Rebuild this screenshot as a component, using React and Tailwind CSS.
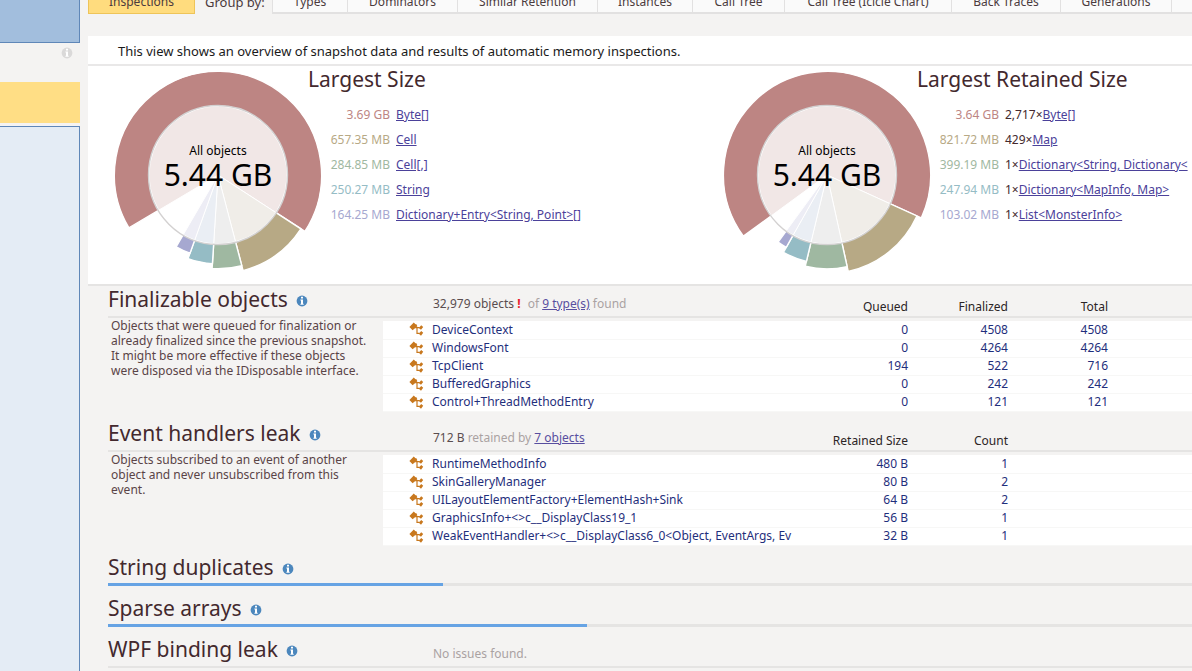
const tabs = [
  { label: "Types", width: "w-[75px]" },
  { label: "Dominators", width: "w-[110px]" },
  { label: "Similar Retention", width: "w-[140px]" },
  { label: "Instances", width: "w-[95px]" },
  { label: "Call Tree", width: "w-[92px]" },
  { label: "Call Tree (Icicle Chart)", width: "w-[167px]" },
  { label: "Back Traces", width: "w-[109px]" },
  { label: "Generations", width: "w-[111px]" },
  { label: "", width: "w-[111px]" },
]

const sliceColors = ["#bd8583", "#b7a985", "#9fb8a1", "#95bcc5", "#a6a8d0"]
const overlayColors = ["#f1e7e6", "#f0ede8", "#eeeeee", "#eaeef4", "#ededf5"]
const sliceRadii = [103.6, 98.8, 93.8, 88.8, 83]
const sizeClasses = ["text-[#bd8583]", "text-[#b7a985]", "text-[#9fb8a1]", "text-[#95bcc5]", "text-[#a6a8d0]"]

const charts = [
  {
    title: "Largest Size",
    angles: [149.3, 393, 435.3, 453.6, 469.7, 480.2],
    rows: [
      { size: "3.69 GB", name: "Byte[]" },
      { size: "657.35 MB", name: "Cell" },
      { size: "284.85 MB", name: "Cell[,]" },
      { size: "250.27 MB", name: "String" },
      { size: "164.25 MB", name: "Dictionary+Entry<String, Point>[]" },
    ],
  },
  {
    title: "Largest Retained Size",
    angles: [143.8, 384.5, 437.6, 463.4, 479.4, 486.1],
    rows: [
      { size: "3.64 GB", count: "2,717×", name: "Byte[]" },
      { size: "821.72 MB", count: "429×", name: "Map" },
      { size: "399.19 MB", count: "1×", name: "Dictionary<String, Dictionary<" },
      { size: "247.94 MB", count: "1×", name: "Dictionary<MapInfo, Map>" },
      { size: "103.02 MB", count: "1×", name: "List<MonsterInfo>" },
    ],
  },
]

const finalizable = [
  ["DeviceContext", "0", "4508", "4508"],
  ["WindowsFont", "0", "4264", "4264"],
  ["TcpClient", "194", "522", "716"],
  ["BufferedGraphics", "0", "242", "242"],
  ["Control+ThreadMethodEntry", "0", "121", "121"],
]

const handlers = [
  ["RuntimeMethodInfo", "480 B", "1"],
  ["SkinGalleryManager", "80 B", "2"],
  ["UILayoutElementFactory+ElementHash+Sink", "64 B", "2"],
  ["GraphicsInfo+<>c__DisplayClass19_1", "56 B", "1"],
  ["WeakEventHandler+<>c__DisplayClass6_0<Object, EventArgs, Ev", "32 B", "1"],
]

function slicePath(from, to, r) {
  const a = (from * Math.PI) / 180
  const b = (to * Math.PI) / 180
  const large = to - from > 180 ? 1 : 0
  return `M104 104 L${104 + r * Math.cos(a)} ${104 + r * Math.sin(a)} A${r} ${r} 0 ${large} 1 ${104 + r * Math.cos(b)} ${104 + r * Math.sin(b)} Z`
}

function InfoIcon({ className }) {
  return (
    <svg viewBox="0 0 12 12" className={className} aria-hidden="true">
      <circle cx="6" cy="6" r="5.4" fill="currentColor" />
      <path d="M5 1.8h2v1.8H5zM4.4 4.6H7v4.2h.7v1H4.4v-1H5V5.6h-.6z" fill="#fff" />
    </svg>
  )
}

function ClassIcon() {
  return (
    <svg viewBox="0 0 15 15" className="h-[15px] w-[15px] shrink-0" fill="#c8781e" aria-hidden="true">
      <path d="M.4 5 4.8.6 6.4 2.2 7.2 2 8.4 4.2 3.6 8.2z" />
      <path d="M6.2 5h4.4v1.2H8.6v4.6h2V12H7.4V6.2H6.2z" />
      <path d="M12.2 3.2 14.2 5 12 7.8 9.8 6zM12.2 9 14.2 10.8 12 13.8 9.8 11.8z" />
    </svg>
  )
}

function Donut({ angles }) {
  return (
    <div className="relative mt-[5px] h-[208px] w-[208px] shrink-0">
      <svg viewBox="0 0 208 208" className="h-full w-full" aria-hidden="true">
        {sliceColors.map((color, i) => (
          <path
            key={color}
            d={slicePath(angles[i], angles[i + 1], sliceRadii[i])}
            fill={color}
            stroke="#fff"
            strokeWidth="1.4"
          />
        ))}
        <circle cx="104" cy="104" r="69.5" fill="#fff" />
        {overlayColors.map((color, i) => (
          <path key={color} d={slicePath(angles[i], angles[i + 1], 69)} fill={color} stroke="#fff" strokeWidth="1" />
        ))}
        <circle cx="104" cy="104" r="69.5" fill="none" stroke="#d3d1d1" strokeWidth="1.4" />
      </svg>
      <div className="absolute inset-0 flex flex-col items-center justify-center pb-4 text-black">
        <span className="text-[12px] leading-4">All objects</span>
        <span className="text-[30px] leading-8">5.44 GB</span>
      </div>
    </div>
  )
}

function SizeChart({ chart }) {
  return (
    <>
      <Donut angles={chart.angles} />
      <div className="-ml-3.5 min-w-0">
        <h2 className="whitespace-nowrap text-[21px] leading-[26px] text-[#43292e]">{chart.title}</h2>
        <ul className="mt-2.5 text-[12px] leading-[25px]">
          {chart.rows.map((row, i) => (
            <li key={row.size} className="flex gap-1.5 whitespace-nowrap">
              <span className={`w-[82px] shrink-0 text-right ${sizeClasses[i]}`}>{row.size}</span>
              <span className="text-[#43292e]">
                {row.count}
                <a href="#" className="text-[#4b419a] underline">{row.name}</a>
              </span>
            </li>
          ))}
        </ul>
      </div>
    </>
  )
}

function SectionTitle({ children }) {
  return (
    <div className="flex h-[26px] w-[325px] shrink-0 items-center gap-2">
      <h2 className="text-[21px] leading-[26px] text-[#43292e]">{children}</h2>
      <InfoIcon className="mt-1 h-3 w-3 text-[#4c87bd]" />
    </div>
  )
}

function Inspection({ title, summary, description, columns, rows }) {
  return (
    <section className="h-[134px]">
      <div className="flex h-8 items-start border-b-2 border-[#e5e4e3]">
        <SectionTitle>{title}</SectionTitle>
        <p className="mt-2 w-[375px] shrink-0 text-[12px] leading-5 text-[#aaa2a2]">{summary}</p>
        {columns.map((column) => (
          <span key={column} className="mt-[11px] w-[100px] shrink-0 text-right text-[12px] leading-5 text-[#2b2425]">{column}</span>
        ))}
      </div>
      <div className="flex items-start">
        <p className="w-[275px] shrink-0 pl-[3px] text-[12px] leading-[15px] text-[#5a4447]">{description}</p>
        <table aria-label={title} className="mt-[3px] flex-1 table-fixed border-collapse bg-white text-[12px] leading-4 text-[#1f2f7c]">
          <tbody>
            {rows.map(([name, ...values]) => (
              <tr key={name} className="h-[18px] border-b border-[#f7f7f6]">
                <td className="w-[425px] p-0">
                  <div className="flex w-[425px] items-center gap-2 overflow-hidden whitespace-nowrap pl-[26px]">
                    <ClassIcon />
                    {name}
                  </div>
                </td>
                {values.map((value, i) => (
                  <td key={i} className="w-[100px] p-0 text-right">{value}</td>
                ))}
                <td />
              </tr>
            ))}
          </tbody>
        </table>
      </div>
    </section>
  )
}

export default function App() {
  return (
    <div className="flex h-screen overflow-hidden bg-[#f4f3f2] font-['Noto_Sans',sans-serif]">
      {/* Sidebar */}
      <aside className="flex w-20 shrink-0 flex-col">
        <div className="h-[43px] border-r border-b border-[#5f87b8] bg-[#a2bedd]" />
        <div className="flex h-[39px] justify-end pt-1 pr-[7px]">
          <InfoIcon className="h-3 w-3 text-[#dad9d9]" />
        </div>
        <div className="h-[41px] bg-[#ffde85]" />
        <div className="mt-[3px] flex-1 border-t border-r border-[#5f87b8] bg-[#e4ecf5]" />
      </aside>

      <main className="ml-2 min-w-0 flex-1 overflow-hidden">
        {/* View tabs */}
        <nav className="-mt-3 flex h-[26px] text-[12px] leading-[26px] text-[#4b3a3d]">
          <button className="w-[107px] shrink-0 border border-[#eec459] bg-[#ffdc7e]">Inspections</button>
          <span className="w-[77px] shrink-0 pl-[10px] pt-px text-[13px]">Group by:</span>
          {tabs.map((tab) => (
            <button key={tab.label} className={`${tab.width} shrink-0 whitespace-nowrap border-b-2 border-l border-[#e2e1e1] bg-[#fafafa] pt-px`}>
              {tab.label}
            </button>
          ))}
        </nav>

        <div className="mt-[22px] border-b-2 border-[#e9e8e8] bg-white">
          <p className="h-7 pl-[30px] text-[13px] leading-[30px] text-[#1a1a1a]">
            This view shows an overview of snapshot data and results of automatic memory inspections.
          </p>
        </div>

        {/* Size overview */}
        <div className="flex h-[220px] border-b-2 border-[#e5e4e3] bg-white">
          {charts.map((chart) => (
            <section key={chart.title} className="flex w-[609px] shrink-0 pl-[26px]">
              <SizeChart chart={chart} />
            </section>
          ))}
        </div>

        <div className="pl-5">
          <Inspection
            title="Finalizable objects"
            summary={
              <>
                <span className="text-[#5a4d4f]">32,979 objects</span> <b className="mr-1 text-[#e8202a]">!</b> of{" "}
                <a href="#" className="text-[#584ea0] underline">9 type(s)</a> found
              </>
            }
            description={
              <>
                Objects that were queued for finalization or
                <br />
                already finalized since the previous snapshot.
                <br />
                It might be more effective if these objects
                <br />
                were disposed via the IDisposable interface.
              </>
            }
            columns={["Queued", "Finalized", "Total"]}
            rows={finalizable}
          />
          <Inspection
            title="Event handlers leak"
            summary={
              <>
                <span className="text-[#5a4d4f]">712 B</span> retained by{" "}
                <a href="#" className="text-[#584ea0] underline">7 objects</a>
              </>
            }
            description={
              <>
                Objects subscribed to an event of another
                <br />
                object and never unsubscribed from this
                <br />
                event.
              </>
            }
            columns={["Retained Size", "Count"]}
            rows={handlers}
          />

          {/* Inspections still running */}
          <section className="h-[41px]">
            <SectionTitle>String duplicates</SectionTitle>
            <div className="mt-[3px] h-[3px] bg-[#e5e4e3]">
              <div className="h-full w-[335px] bg-[#66a3e4]" />
            </div>
          </section>
          <section className="h-[41px]">
            <SectionTitle>Sparse arrays</SectionTitle>
            <div className="mt-[3px] h-[3px] bg-[#e5e4e3]">
              <div className="h-full w-[479px] bg-[#66a3e4]" />
            </div>
          </section>
          <section className="flex h-8 border-b-2 border-[#e5e4e3]">
            <SectionTitle>WPF binding leak</SectionTitle>
            <p className="mt-2 text-[12px] leading-5 text-[#aaa2a2]">No issues found.</p>
          </section>
        </div>
      </main>
    </div>
  )
}
